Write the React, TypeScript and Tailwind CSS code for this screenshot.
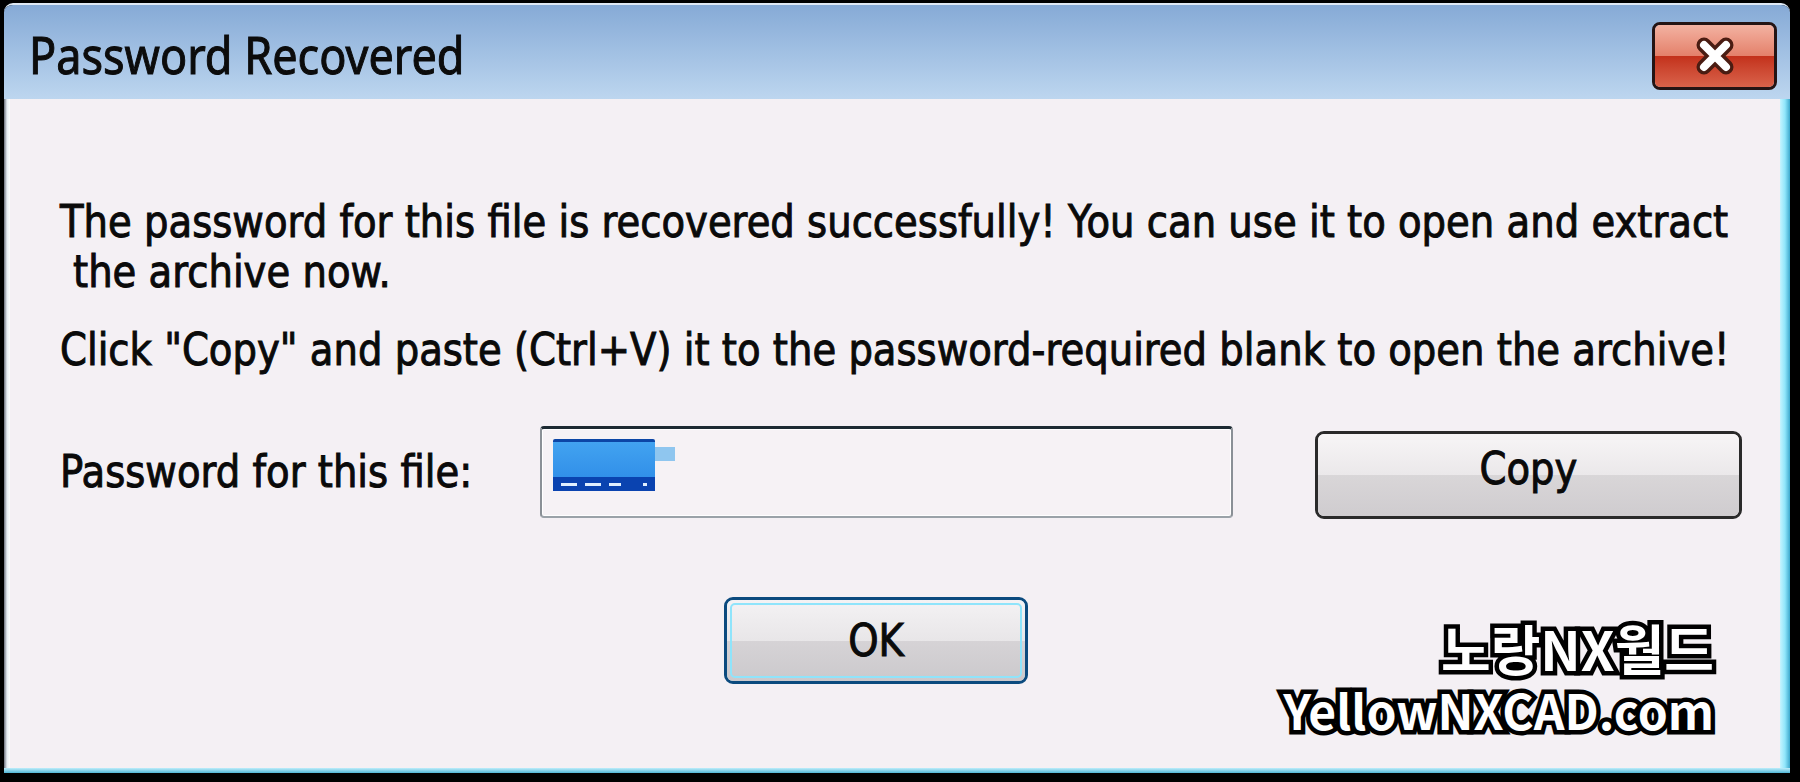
import React from "react"

function CloseButton() {
  return (
    <div className="mt-[17px] mr-[13px] flex h-[68px] w-[125px] flex-col overflow-hidden rounded-[8px] border-[3px] border-[#241414] relative">
      <div className="h-1/2 bg-linear-to-b from-[#f2b2a2] to-[#e4806a]" />
      <div className="h-1/2 bg-linear-to-b from-[#c3301a] to-[#d9624a]" />
      <svg
        className="absolute left-1/2 top-1/2 -translate-x-1/2 -translate-y-1/2"
        width="46"
        height="40"
        viewBox="0 0 46 40"
      >
        <path d="M12 9 L34 31 M34 9 L12 31" stroke="#4a1c12" strokeWidth="15" strokeLinecap="round" />
        <path d="M12 9 L34 31 M34 9 L12 31" stroke="#ffffff" strokeWidth="8" strokeLinecap="round" />
      </svg>
    </div>
  )
}

function Line({ children, className = "" }: { children: React.ReactNode; className?: string }) {
  return (
    <div className={"h-[50px] leading-[50px] whitespace-nowrap " + className}>
      <span className="inline-block scale-y-[1.14]">{children}</span>
    </div>
  )
}

export default function App() {
  return (
    <div className="h-[782px] w-[1800px] bg-black pl-[4px] pt-[3px] font-['DejaVu_Sans',sans-serif] text-[38.6px] text-[#0a0a0a] [-webkit-text-stroke:0.9px_#0a0a0a]">
      <div className="flex h-[770px] w-[1786px] flex-col overflow-hidden rounded-t-[9px] border-t-2 border-[#dfe9f5]">
        {/* title bar */}
        <div className="flex h-[94px] items-start justify-between bg-linear-to-b from-[#86aad6] via-[#a1c0e3] to-[#bdd6ef]">
          <div className="pl-[25px] pt-[24px] font-['Noto_Sans',sans-serif] text-[45px] leading-[50px] text-[#0c0c0c]">
            <span className="inline-block scale-y-[1.15]">Password Recovered</span>
          </div>
          <CloseButton />
        </div>

        <div className="flex flex-1">
          <div className="w-[6px] bg-linear-to-r from-[#6f7480] via-[#e8eef4] to-white" />

          {/* content */}
          <div className="relative flex-1 bg-[#f4f0f4] pl-[50px] pt-[98px]">
            <Line>The password for this file is recovered successfully! You can use it to open and extract</Line>
            <Line className="pl-[13px]">the archive now.</Line>
            <Line className="mt-[28px]">Click "Copy" and paste (Ctrl+V) it to the password-required blank to open the archive!</Line>

            <div className="mt-[50px] flex items-center">
              <div className="w-[480px]">
                <Line>Password for this file:</Line>
              </div>
              <div className="flex h-[92px] w-[693px] items-start rounded-[4px] border-x-2 border-t-[3px] border-b-2 border-x-[#8a9096] border-t-[#1c2a32] border-b-[#9aa2a8] bg-[#f6f2f5] pl-[11px] pt-[10px] shadow-[inset_0_0_0_1px_#ffffff]">
                <div className="flex h-[52px] w-[102px] flex-col rounded-[2px] border-t-[3px] border-[#0c46a6] bg-linear-to-b from-[#42a3f0] to-[#2b88e6]">
                  <div className="flex-1" />
                  <div className="flex h-[14px] items-center gap-[8px] bg-[#0a43b0] px-[8px]">
                    <span className="h-[3px] w-[16px] bg-[#dfefff]" />
                    <span className="h-[3px] w-[16px] bg-[#dfefff]" />
                    <span className="h-[3px] w-[12px] bg-[#dfefff]" />
                    <span className="ml-auto h-[3px] w-[4px] bg-[#dfefff]" />
                  </div>
                </div>
                <div className="mt-[8px] h-[14px] w-[20px] bg-[#8fc6ef]" />
              </div>
              <button className="ml-[82px] mt-[6px] flex h-[88px] w-[427px] flex-col overflow-hidden rounded-[9px] border-[3px] border-[#2a2a2a] relative shadow-[inset_0_0_0_2px_#fafafa]">
                <div className="h-1/2 w-full bg-linear-to-b from-[#f7f5f6] to-[#ebe8ea]" />
                <div className="h-1/2 w-full bg-linear-to-b from-[#d9d6d8] to-[#cfcccf]" />
                <div className="absolute inset-0 flex items-center justify-center pb-[12px]">
                  <Line>Copy</Line>
                </div>
              </button>
            </div>

            <button className="relative ml-[664px] mt-[78px] flex h-[87px] w-[304px] flex-col overflow-hidden rounded-[9px] border-[3px] border-[#0b4a7e] shadow-[inset_0_0_0_3px_#86e3fb]">
              <div className="h-1/2 w-full bg-linear-to-b from-[#f4f2f4] to-[#e8e6e8]" />
              <div className="h-1/2 w-full bg-linear-to-b from-[#d6d3d6] to-[#cbc9cc]" />
              <div className="absolute inset-[3px] rounded-[5px] border-2 border-[#8fe4fb]" />
              <div className="absolute inset-0 flex items-center justify-center">
                <Line>OK</Line>
              </div>
            </button>

            {/* watermark */}
            <div className="absolute bottom-[28px] right-[66px] flex flex-col items-end font-['Noto_Sans_CJK_KR',sans-serif] font-bold text-white [-webkit-text-stroke:9px_#000] [paint-order:stroke_fill]">
              <div className="text-[54px] leading-[60px]">노랑NX월드</div>
              <div className="text-[48px] leading-[62px]">YellowNXCAD.com</div>
            </div>
          </div>

          <div className="w-[10px] bg-linear-to-r from-[#c6f4ff] via-[#8fe6fb] to-[#3aa8cc]" />
        </div>

        <div className="h-[5px] bg-linear-to-b from-[#bdeefb] to-[#4db6d6]" />
      </div>
    </div>
  )
}
